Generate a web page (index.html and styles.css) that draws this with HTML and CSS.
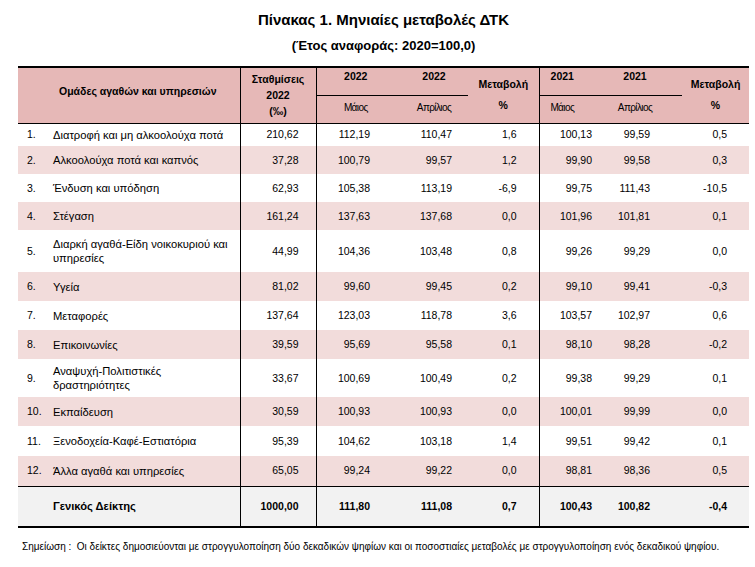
FILE: index.html
```html
<!DOCTYPE html>
<html lang="el">
<head>
<meta charset="utf-8">
<title>Πίνακας 1. Μηνιαίες μεταβολές ΔΤΚ</title>
<link rel="stylesheet" href="styles.css">
</head>
<body>
<div class="page">
  <h1 class="title">Πίνακας 1. Μηνιαίες μεταβολές ΔΤΚ</h1>
  <h2 class="subtitle">(Έτος αναφοράς: 2020=100,0)</h2>
  <table class="cpi">
    <colgroup>
      <col class="c0"><col class="c1"><col class="c2"><col class="c3"><col class="c4"><col class="c5"><col class="c6"><col class="c7">
    </colgroup>
    <thead>
      <tr class="ha">
        <th rowspan="2" class="grp vr">Ομάδες αγαθών και υπηρεσιών</th>
        <th rowspan="2" class="wt vr">Σταθμίσεις<br>2022<br>(‰)</th>
        <th class="yr y2">2022</th>
        <th class="yr y3">2022</th>
        <th rowspan="2" class="chg ch4 vr">Μεταβολή<br>%</th>
        <th class="yr y5">2021</th>
        <th class="yr y6">2021</th>
        <th rowspan="2" class="chg ch7">Μεταβολή<br>%</th>
      </tr>
      <tr class="hb">
        <th class="mo y2">Μάιος</th>
        <th class="mo y3">Απρίλιος</th>
        <th class="mo y5">Μάιος</th>
        <th class="mo y6">Απρίλιος</th>
      </tr>
    </thead>
    <tbody>
      <tr class="short"><td><div class="item"><span class="num">1.</span><span class="name">Διατροφή και μη αλκοολούχα ποτά</span></div></td><td>210,62</td><td>112,19</td><td>110,47</td><td>1,6</td><td>100,13</td><td>99,59</td><td>0,5</td></tr>
      <tr class="alt snug"><td><div class="item"><span class="num">2.</span><span class="name">Αλκοολούχα ποτά και καπνός</span></div></td><td>37,28</td><td>100,79</td><td>99,57</td><td>1,2</td><td>99,90</td><td>99,58</td><td>0,3</td></tr>
      <tr class="snug"><td><div class="item"><span class="num">3.</span><span class="name">Ένδυση και υπόδηση</span></div></td><td>62,93</td><td>105,38</td><td>113,19</td><td>-6,9</td><td>99,75</td><td>111,43</td><td>-10,5</td></tr>
      <tr class="alt snug"><td><div class="item"><span class="num">4.</span><span class="name">Στέγαση</span></div></td><td>161,24</td><td>137,63</td><td>137,68</td><td>0,0</td><td>101,96</td><td>101,81</td><td>0,1</td></tr>
      <tr class="tall"><td><div class="item"><span class="num">5.</span><span class="name">Διαρκή αγαθά-Είδη νοικοκυριού και<br>υπηρεσίες</span></div></td><td>44,99</td><td>104,36</td><td>103,48</td><td>0,8</td><td>99,26</td><td>99,29</td><td>0,0</td></tr>
      <tr class="alt"><td><div class="item"><span class="num">6.</span><span class="name">Υγεία</span></div></td><td>81,02</td><td>99,60</td><td>99,45</td><td>0,2</td><td>99,10</td><td>99,41</td><td>-0,3</td></tr>
      <tr><td><div class="item"><span class="num">7.</span><span class="name">Μεταφορές</span></div></td><td>137,64</td><td>123,03</td><td>118,78</td><td>3,6</td><td>103,57</td><td>102,97</td><td>0,6</td></tr>
      <tr class="alt"><td><div class="item"><span class="num">8.</span><span class="name">Επικοινωνίες</span></div></td><td>39,59</td><td>95,69</td><td>95,58</td><td>0,1</td><td>98,10</td><td>98,28</td><td>-0,2</td></tr>
      <tr class="mid"><td><div class="item"><span class="num">9.</span><span class="name">Αναψυχή-Πολιτιστικές<br>δραστηριότητες</span></div></td><td>33,67</td><td>100,69</td><td>100,49</td><td>0,2</td><td>99,38</td><td>99,29</td><td>0,1</td></tr>
      <tr class="alt"><td><div class="item"><span class="num">10.</span><span class="name">Εκπαίδευση</span></div></td><td>30,59</td><td>100,93</td><td>100,93</td><td>0,0</td><td>100,01</td><td>99,99</td><td>0,0</td></tr>
      <tr class="wide"><td><div class="item"><span class="num">11.</span><span class="name">Ξενοδοχεία-Καφέ-Εστιατόρια</span></div></td><td>95,39</td><td>104,62</td><td>103,18</td><td>1,4</td><td>99,51</td><td>99,42</td><td>0,1</td></tr>
      <tr class="alt wide"><td><div class="item"><span class="num">12.</span><span class="name">Άλλα αγαθά και υπηρεσίες</span></div></td><td>65,05</td><td>99,24</td><td>99,22</td><td>0,0</td><td>98,81</td><td>98,36</td><td>0,5</td></tr>
    </tbody>
    <tfoot>
      <tr class="total"><td><div class="item"><span class="num"></span><span class="name">Γενικός Δείκτης</span></div></td><td>1000,00</td><td>111,80</td><td>111,08</td><td>0,7</td><td>100,43</td><td>100,82</td><td>-0,4</td></tr>
    </tfoot>
  </table>
  <p class="note">Σημείωση :&nbsp; Οι δείκτες δημοσιεύονται με στρογγυλοποίηση δύο δεκαδικών ψηφίων και οι ποσοστιαίες μεταβολές με στρογγυλοποίηση ενός δεκαδικού ψηφίου.</p>
</div>
</body>
</html>
```
FILE: styles.css
```css
html, body {
  margin: 0;
  padding: 0;
  background: #ffffff;
}

body {
  font-family: "Liberation Sans", Arial, sans-serif;
  color: #000000;
}

.page {
  padding-top: 11px;
}

.title {
  margin: 0 0 0 18px;
  width: 731px;
  text-align: center;
  font-size: 15px;
  line-height: 18px;
  font-weight: bold;
}

.subtitle {
  margin: 8px 0 0 18px;
  width: 731px;
  text-align: center;
  font-size: 13px;
  line-height: 18px;
  font-weight: bold;
}

.cpi {
  margin: 11px 0 0 18px;
  width: 731px;
  table-layout: fixed;
  border-collapse: collapse;
  border-top: 2px solid #000;
  border-bottom: 2px solid #000;
  font-size: 10.5px;
  line-height: 13px;
}

.c0 { width: 222px; }
.c1 { width: 76px; }
.c2 { width: 79px; }
.c3 { width: 73px; }
.c4 { width: 71px; }
.c5 { width: 66px; }
.c6 { width: 77px; }
.c7 { width: 67px; }

.cpi th,
.cpi td {
  padding: 0;
  vertical-align: middle;
}

/* header */
.cpi thead th {
  background: #e6b8b7;
  font-weight: bold;
  text-align: center;
  border-bottom: 1px solid #000;
}

.cpi .vr { border-right: 1px solid #000; }

.ha { height: 28px; }
.hb { height: 28px; }

.cpi .grp { padding: 0 0 7px 18px; }

.wt {
  line-height: 16px;
  padding-top: 6px;
}

.chg {
  line-height: 21px;
  padding-bottom: 7px;
}
.ch4 { padding-right: 6px; }

.cpi .yr { padding-bottom: 9px; }
.cpi .mo {
  font-weight: normal;
  font-size: 10px;
  letter-spacing: -0.6px;
  padding-bottom: 4px;
}
.cpi .y3 { padding-left: 5px; }
.cpi .y5 { padding-right: 20px; }
.cpi .y6 { padding-right: 17px; }

/* body rows */
.cpi tbody tr { height: 29px; }
.cpi tbody tr.short { height: 23px; }
.cpi tbody tr.snug { height: 28px; }
.cpi tbody tr.tall { height: 42px; }
.cpi tbody tr.mid { height: 38px; }
.cpi tbody tr.wide { height: 30px; }
.cpi tbody tr.alt td { background: #f2dcdb; }

.cpi td { text-align: right; }
.cpi td:nth-child(1) {
  text-align: left;
  padding-left: 9px;
  border-right: 1px solid #000;
}
.cpi td:nth-child(2) { padding-right: 17px; border-right: 1px solid #000; }
.cpi td:nth-child(3) { padding-right: 25px; }
.cpi td:nth-child(4) { padding-right: 16px; }
.cpi td:nth-child(5) { padding-right: 22px; border-right: 1px solid #000; }
.cpi td:nth-child(6) { padding-right: 13px; }
.cpi td:nth-child(7) { padding-right: 32px; }
.cpi td:nth-child(8) { padding-right: 22px; }

.item {
  display: flex;
  align-items: center;
}
.num {
  flex: 0 0 26px;
}
.name {
  white-space: nowrap;
  font-size: 11.2px;
  line-height: 14px;
}

/* total row */
.total {
  height: 41px;
}
.total td {
  background: #f2f2f2;
  font-weight: bold;
  border-top: 1px solid #000;
}

.note {
  margin: 12px 0 0 22px;
  font-size: 10px;
  line-height: 13px;
}
```
